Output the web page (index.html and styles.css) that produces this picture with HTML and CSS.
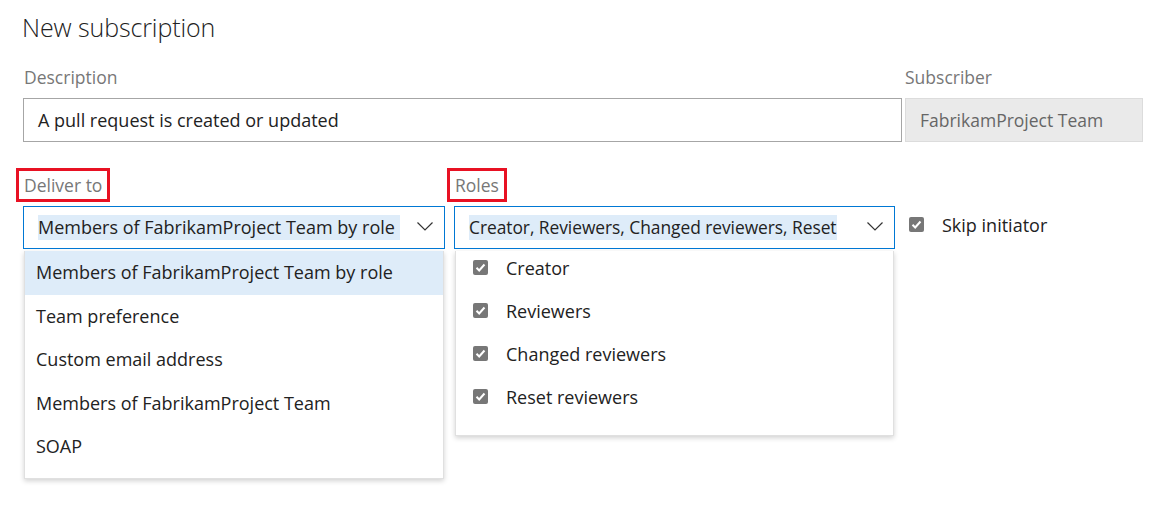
FILE: index.html
```html
<!DOCTYPE html>
<html>
<head>
<meta charset="utf-8">
<link rel="stylesheet" href="styles.css">
</head>
<body>
<div class="page">
  <h1 class="title">New subscription</h1>
  <div class="row-top">
    <div class="field">
      <div class="label">Description</div>
      <div class="input">A pull request is created or updated</div>
    </div>
    <div class="field">
      <div class="label">Subscriber</div>
      <div class="input input-disabled">FabrikamProject Team</div>
    </div>
  </div>
  <div class="row-bottom">
    <div class="field deliver">
      <div class="label-wrap"><span class="label marked">Deliver to</span></div>
      <div class="select">
        <span class="sel-text">Members of FabrikamProject Team by role</span>
        <svg class="chev" width="16" height="9" viewBox="0 0 16 9"><polyline points="0.5,0.5 8,8 15.5,0.5" fill="none" stroke="#333" stroke-width="1.2"/></svg>
      </div>
      <ul class="menu menu-deliver">
        <li class="item active">Members of FabrikamProject Team by role</li>
        <li class="item">Team preference</li>
        <li class="item">Custom email address</li>
        <li class="item">Members of FabrikamProject Team</li>
        <li class="item">SOAP</li>
      </ul>
    </div>
    <div class="field roles">
      <div class="label-wrap"><span class="label marked">Roles</span></div>
      <div class="select">
        <span class="sel-text">Creator, Reviewers, Changed reviewers, Reset</span>
        <svg class="chev" width="16" height="9" viewBox="0 0 16 9"><polyline points="0.5,0.5 8,8 15.5,0.5" fill="none" stroke="#333" stroke-width="1.2"/></svg>
      </div>
      <ul class="menu menu-roles">
        <li class="check-item"><span class="cb"><svg width="15" height="15" viewBox="0 0 15 15"><polyline points="3.5,7.8 6.2,10.5 11.5,4.5" fill="none" stroke="#fff" stroke-width="2"/></svg></span>Creator</li>
        <li class="check-item"><span class="cb"><svg width="15" height="15" viewBox="0 0 15 15"><polyline points="3.5,7.8 6.2,10.5 11.5,4.5" fill="none" stroke="#fff" stroke-width="2"/></svg></span>Reviewers</li>
        <li class="check-item"><span class="cb"><svg width="15" height="15" viewBox="0 0 15 15"><polyline points="3.5,7.8 6.2,10.5 11.5,4.5" fill="none" stroke="#fff" stroke-width="2"/></svg></span>Changed reviewers</li>
        <li class="check-item"><span class="cb"><svg width="15" height="15" viewBox="0 0 15 15"><polyline points="3.5,7.8 6.2,10.5 11.5,4.5" fill="none" stroke="#fff" stroke-width="2"/></svg></span>Reset reviewers</li>
      </ul>
    </div>
    <div class="skip">
      <span class="cb"><svg width="15" height="15" viewBox="0 0 15 15"><polyline points="3.5,7.8 6.2,10.5 11.5,4.5" fill="none" stroke="#fff" stroke-width="2"/></svg></span>
      <span>Skip initiator</span>
    </div>
  </div>
</div>
</body>
</html>
```

FILE: styles.css
```css
* { box-sizing: border-box; }
html, body { margin: 0; padding: 0; background: #fff; }
body {
  font-family: "Open Sans", "Noto Sans", sans-serif;
  color: #222;
  width: 1165px;
  height: 507px;
  overflow: hidden;
}
.page { padding: 8px 22px 0 23px; }
.title {
  margin: 0 0 0 -1px;
  font-weight: 300;
  font-size: 25px;
  line-height: 38px;
  color: #222;
  letter-spacing: -0.1px;
}
.row-top {
  display: grid;
  grid-template-columns: 879px 238px;
  column-gap: 3px;
  margin-top: 19px;
}
.label {
  font-size: 17.5px;
  color: #777;
  line-height: 24px;
  padding-left: 1px;
}
.row-top .label { margin-bottom: 9px; }
.row-top .field + .field .label { padding-left: 0; }
.input {
  height: 44px;
  border: 1px solid #a6a6a6;
  padding: 0 14px;
  font-size: 18px;
  line-height: 42px;
  color: #222;
  white-space: nowrap;
  overflow: hidden;
}
.input-disabled {
  background: #eaeaea;
  border-color: #dcdcdc;
  color: #666;
  font-size: 17.5px;
}
.row-bottom {
  display: flex;
  align-items: flex-start;
  margin-top: 27px;
}
.field { position: relative; }
.deliver { width: 422px; }
.roles { width: 441px; margin-left: 9px; }
.label-wrap { height: 33px; margin-left: -7px; margin-bottom: 5px; margin-top: -1px; }
.label.marked {
  display: inline-block;
  border: 3px solid #e81123;
  padding: 1px 5px 0 5px;
  height: 34px;
  line-height: 27px;
}
.select {
  height: 43px;
  border: 1px solid #0078d4;
  display: flex;
  align-items: center;
  padding: 0 11px 0 14px;
  justify-content: space-between;
  margin-top: 1px;
}
.sel-text {
  background: #deecf9;
  font-size: 18px;
  line-height: 25px;
  white-space: nowrap;
  color: #222;
  padding-right: 5px;
}
.roles .sel-text { padding-right: 0; font-size: 17.4px; letter-spacing: -0.05px; }
.chev { flex: none; margin-bottom: 3px; }
.menu {
  position: absolute;
  top: 82px;
  left: 1px;
  margin: 0;
  padding: 0;
  list-style: none;
  background: #fff;
  border: 1px solid #e0e0e0;
  border-top: none;
  box-shadow: 0 2px 5px rgba(0,0,0,0.18);
  z-index: 2;
}
.menu-deliver { width: 420px; height: 228px; }
.menu-roles { width: 439px; height: 185px; }
.item {
  height: 43.5px;
  line-height: 43.5px;
  padding-left: 11px;
  font-size: 18px;
  white-space: nowrap;
}
.item.active { background: #deecf9; }
.check-item {
  height: 43px;
  display: flex;
  align-items: center;
  padding-left: 17px;
  font-size: 18px;
  margin-top: -5px;
  margin-bottom: 5px;
}
.check-item + .check-item { margin-top: -5px; }
.cb {
  width: 15px;
  height: 15px;
  border-radius: 2px;
  background: #777;
  display: inline-flex;
  flex: none;
  margin-right: 18px;
}
.skip {
  display: flex;
  align-items: center;
  margin-left: 14px;
  margin-top: 38px;
  height: 43px;
  font-size: 18px;
  color: #222;
}
.skip .cb { margin-top: -8px; }
.skip span:last-child { margin-top: -8px; }
```
